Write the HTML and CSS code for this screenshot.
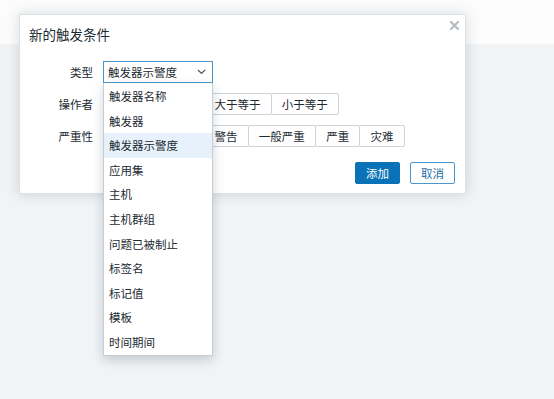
FILE: index.html
```html
<!DOCTYPE html>
<html lang="zh-CN">
<head>
  <meta charset="UTF-8">
  <title>新的触发条件</title>
  <link rel="stylesheet" href="styles.css">
</head>
<body>
  <div class="topbar"></div>
  <div class="page"></div>

  <div class="dialog">
    <button class="close" title="关闭">
      <svg width="9" height="9" viewBox="0 0 9 9"><path d="M1 1 L8 8 M8 1 L1 8" stroke="#b4bbc1" stroke-width="2.2" stroke-linecap="square"/></svg>
    </button>
    <h2 class="title">新的触发条件</h2>

    <div class="form">
      <label>类型</label>
      <div class="field">
        <div class="select">
          <span>触发器示警度</span>
          <svg width="9" height="6" viewBox="0 0 9 6"><polyline points="1,1 4.5,4.5 8,1" fill="none" stroke="#555" stroke-width="1.2"/></svg>
        </div>
        <ul class="dropdown">
          <li>触发器名称</li>
          <li>触发器</li>
          <li class="active">触发器示警度</li>
          <li>应用集</li>
          <li>主机</li>
          <li>主机群组</li>
          <li>问题已被制止</li>
          <li>标签名</li>
          <li>标记值</li>
          <li>模板</li>
          <li>时间期间</li>
        </ul>
      </div>

      <label>操作者</label>
      <div class="radio">
        <span>等于</span>
        <span>不等于</span>
        <span>大于等于</span>
        <span>小于等于</span>
      </div>

      <label>严重性</label>
      <div class="radio">
        <span>未分类</span>
        <span>信息</span>
        <span>警告</span>
        <span>一般严重</span>
        <span>严重</span>
        <span>灾难</span>
      </div>
    </div>

    <div class="footer">
      <button class="btn primary">添加</button>
      <button class="btn">取消</button>
    </div>
  </div>
</body>
</html>
```

FILE: styles.css
```css
* { box-sizing: border-box; }
body {
  margin: 0;
  font-family: "Noto Sans CJK SC", "Liberation Sans", sans-serif;
  font-size: 11.5px;
  color: #1c2a31;
  background: #f1f3f5;
  height: 399px;
  overflow: hidden;
}
.topbar {
  height: 44px;
  background: #fcfcfc;
}
.page {
  height: 355px;
}
.dialog {
  position: absolute;
  left: 19px;
  top: 14px;
  width: 447px;
  height: 180px;
  background: #fff;
  border: 1px solid #dde2e6;
  box-shadow: 0 0 12px rgba(40, 60, 80, 0.18);
  padding: 10px 10px 9px 9px;
}
.close {
  position: absolute;
  right: 5px;
  top: 4px;
  border: none;
  background: none;
  padding: 0;
  width: 12px;
  height: 12px;
  display: flex;
  align-items: center;
  justify-content: center;
}
.title {
  margin: 0;
  font-size: 13.5px;
  font-weight: normal;
  line-height: 18px;
  color: #1c2a31;
}
.form {
  margin-top: 18px;
  display: grid;
  grid-template-columns: 64px 1fr;
  column-gap: 10px;
  row-gap: 10px;
}
.form label {
  text-align: right;
  line-height: 22px;
}
.field {
  position: relative;
}
.select {
  width: 110px;
  height: 22px;
  border: 1px solid #4b97cc;
  display: flex;
  align-items: center;
  justify-content: space-between;
  padding: 0 6px 0 4px;
}
.dropdown {
  position: absolute;
  left: 0;
  top: 22px;
  width: 110px;
  margin: 0;
  padding: 1px 0 0;
  list-style: none;
  background: #fff;
  border: 1px solid #c6ced5;
  border-top: none;
  box-shadow: 0 4px 10px rgba(40, 60, 80, 0.22);
  z-index: 2;
}
.dropdown li {
  height: 24.6px;
  line-height: 24.6px;
  padding: 0 5px;
  white-space: nowrap;
}
.dropdown li.active {
  background: #e6f1fb;
}
.radio {
  display: flex;
}
.radio span {
  height: 22px;
  line-height: 20px;
  padding: 0 10.2px;
  border: 1px solid #cdd3d8;
  border-radius: 2px;
  background: #fff;
  white-space: nowrap;
}
.radio span + span {
  margin-left: -1px;
}
.footer {
  margin-top: 15px;
  display: flex;
  justify-content: flex-end;
  gap: 10px;
}
.btn {
  font: inherit;
  height: 22px;
  width: 45px;
  padding: 0;
  border: 1px solid #4b97cc;
  border-radius: 2px;
  background: #fff;
  color: #1f6fa8;
  cursor: pointer;
}
.btn.primary {
  background: #0a72b6;
  border-color: #0a72b6;
  color: #fff;
}
```
